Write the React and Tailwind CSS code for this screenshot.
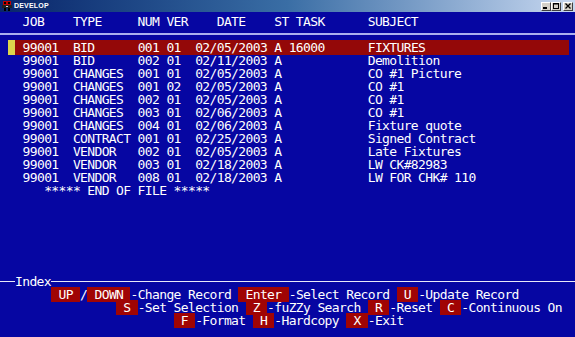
import React from "react";

function place(parts) {
  let s = "";
  for (const [col, text] of parts) {
    if (s.length < col) s = s.padEnd(col, " ");
    s += text;
  }
  return s;
}

const rows = [
  ["BID", "001", "01", "02/05/2003", "A", "16000", "FIXTURES"],
  ["BID", "002", "01", "02/11/2003", "A", "", "Demolition"],
  ["CHANGES", "001", "01", "02/05/2003", "A", "", "CO #1 Picture"],
  ["CHANGES", "001", "02", "02/05/2003", "A", "", "CO #1"],
  ["CHANGES", "002", "01", "02/05/2003", "A", "", "CO #1"],
  ["CHANGES", "003", "01", "02/06/2003", "A", "", "CO #1"],
  ["CHANGES", "004", "01", "02/06/2003", "A", "", "Fixture quote"],
  ["CONTRACT", "001", "01", "02/25/2003", "A", "", "Signed Contract"],
  ["VENDOR", "002", "01", "02/05/2003", "A", "", "Late Fixtures"],
  ["VENDOR", "003", "01", "02/18/2003", "A", "", "LW CK#82983"],
  ["VENDOR", "008", "01", "02/18/2003", "A", "", "LW FOR CHK# 110"],
];

function rowText(r) {
  return place([
    [3, "99001"],
    [10, r[0]],
    [19, r[1]],
    [23, r[2]],
    [27, r[3]],
    [38, r[4]],
    [40, r[5]],
    [51, r[6]],
  ]);
}

const keyRows = [
  {
    start: 7,
    segs: [
      [" UP ", 1],
      ["/", 0],
      [" DOWN ", 1],
      ["-Change Record ", 0],
      [" Enter ", 1],
      ["-Select Record ", 0],
      [" U ", 1],
      ["-Update Record", 0],
    ],
  },
  {
    start: 16,
    segs: [
      [" S ", 1],
      ["-Set Selection ", 0],
      [" Z ", 1],
      ["-fuZZy Search ", 0],
      [" R ", 1],
      ["-Reset ", 0],
      [" C ", 1],
      ["-Continuous On", 0],
    ],
  },
  {
    start: 24,
    segs: [
      [" F ", 1],
      ["-Format ", 0],
      [" H ", 1],
      ["-Hardcopy ", 0],
      [" X ", 1],
      ["-Exit", 0],
    ],
  },
];

function Row({ children, className = "" }) {
  return <div className={"h-[13px] " + className}>{children}</div>;
}

function TitleButton({ children }) {
  return (
    <div className="w-[10px] h-[9px] bg-[#d4d0c8] border-t border-l border-t-white border-l-white border-b border-r border-b-[#404040] border-r-[#404040] flex items-center justify-center">
      {children}
    </div>
  );
}

export default function App() {
  const header = place([
    [3, "JOB"],
    [10, "TYPE"],
    [19, "NUM"],
    [23, "VER"],
    [30, "DATE"],
    [38, "ST"],
    [41, "TASK"],
    [51, "SUBJECT"],
  ]);
  const first = rowText(rows[0]).padEnd(80, " ");

  return (
    <div className="w-[575px] h-[337px] overflow-hidden bg-[#0606a2] flex flex-col">
      {/* title bar */}
      <div className="h-[12px] shrink-0 flex items-center justify-between bg-gradient-to-r from-[#0a246a] via-[#3a6ea5] to-[#c8d8f0] pl-[2px] pr-[2px]">
        <div className="flex items-center gap-[2px]">
          <svg width="10" height="10" viewBox="0 0 10 10">
            <rect x="1" y="0" width="8" height="4" fill="#c00000" />
            <rect x="2" y="1" width="2" height="2" fill="#000" />
            <rect x="6" y="1" width="2" height="2" fill="#000" />
            <rect x="0" y="4" width="10" height="3" fill="#202020" />
            <rect x="2" y="7" width="2" height="3" fill="#000" />
            <rect x="6" y="7" width="2" height="3" fill="#000" />
            <rect x="4" y="5" width="2" height="1" fill="#e0e0e0" />
          </svg>
          <span className="font-['Liberation_Sans',sans-serif] font-bold text-[7px] leading-[12px] text-white tracking-[0.2px]">
            DEVELOP
          </span>
        </div>
        <div className="flex items-center">
          <TitleButton>
            <svg width="6" height="6" viewBox="0 0 6 6">
              <rect x="0" y="4" width="4" height="2" fill="#000" />
            </svg>
          </TitleButton>
          <TitleButton>
            <svg width="6" height="6" viewBox="0 0 6 6">
              <rect x="0.5" y="0.5" width="5" height="5" fill="none" stroke="#000" />
              <rect x="0" y="0" width="6" height="1.5" fill="#000" />
            </svg>
          </TitleButton>
          <div className="w-[2px]" />
          <TitleButton>
            <svg width="6" height="6" viewBox="0 0 6 6">
              <path d="M0.5 0.5 L5.5 5.5 M5.5 0.5 L0.5 5.5" stroke="#000" strokeWidth="1.3" />
            </svg>
          </TitleButton>
        </div>
      </div>

      {/* terminal */}
      <div className="pt-[3px] pl-[1px] text-white font-['DejaVu_Sans_Mono',monospace] text-[13px] leading-[13px] tracking-[-0.636px] whitespace-pre">
        <Row>{header}</Row>
        <Row className="pt-[5px] -ml-[1px]">
          <div className="h-[2px] bg-[#aab0ee]" />
        </Row>
        <Row>
          <span> </span>
          <span className="bg-[#dcd44c]"> </span>
          <span className="bg-[#940808]">{first.slice(2, 79)}</span>
        </Row>
        {rows.slice(1).map((r, i) => (
          <Row key={i}>{rowText(r)}</Row>
        ))}
        <Row>{place([[6, "***** END OF FILE *****"]])}</Row>

        <div className="h-[78px]" />

        <Row className="flex items-center -ml-[1px]">
          <div className="w-[15px] h-[1.5px] bg-[#e8e8f8]" />
          <span>Index</span>
          <div className="flex-1 h-[1.5px] bg-[#e8e8f8]" />
        </Row>
        {keyRows.map((kr, i) => (
          <Row key={i}>
            <span>{" ".repeat(kr.start)}</span>
            {kr.segs.map(([t, red], j) => (
              <span key={j} className={red ? "bg-[#a00404]" : ""}>
                {t}
              </span>
            ))}
          </Row>
        ))}
      </div>
    </div>
  );
}
